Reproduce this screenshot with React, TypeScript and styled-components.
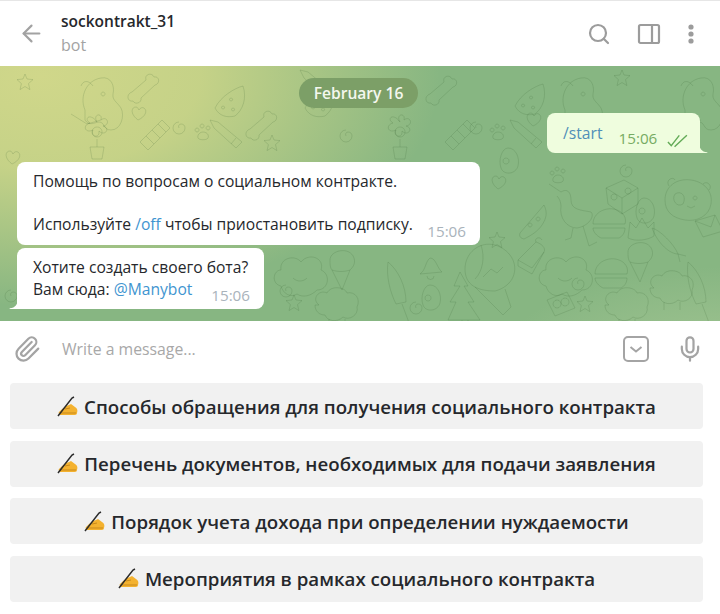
import styled, { createGlobalStyle } from "styled-components";
import { ArrowLeft, Mic, Paperclip, Search } from "lucide-react";

const GlobalStyle = createGlobalStyle`
  html, body {
    margin: 0;
    padding: 0;
    background: #fff;
    font-family: "Open Sans", "Liberation Sans", sans-serif;
  }
`;

const KEYBOARD = [
  "Способы обращения для получения социального контракта",
  "Перечень документов, необходимых для подачи заявления",
  "Порядок учета дохода при определении нуждаемости",
  "Мероприятия в рамках социального контракта",
];

// wallpaper doodles, local coords
const SHAPES: Record<string, string> = {
  dog: "M0 30c-6-14 2-30 16-32 10-2 14 8 12 16-1 6 4 8 8 14 4 8 0 22-10 22-8 0-6-8-12-8-6 1-10 4-14-2zM8 6c-4-6-10-6-12 0M18 12a2 2 0 1 0 .1 0M-14 34l16 10 14-4",
  bone: "M0 14L14 2c-2-6 6-8 8-3 6-1 6 7 1 8L9 20c1 5-6 7-8 3-6 1-7-7-1-9z",
  star: "M7 0l2 5 6 .6-4.500 4 1.400 6L7 12.500 2 15.600l1.400-6L-1 5.600 5 5z",
  melon: "M0 18C6 6 20-2 28-4c4 12 0 24-8 30C12 28 4 26 0 18zM8 16a1.5 1.5 0 1 0 .1 0M16 8a1.5 1.5 0 1 0 .1 0M18 18a1.5 1.5 0 1 0 .1 0",
  pencil: "M0 0l8 2 24 20-6 6L4 8zM26 18l-5 6",
  flower: "M12 12a5 5 0 1 0 .1 0M12 7c-5-8 6-10 4-2 6-5 10 5 2 6 8 2 2 11-4 5 1 8-9 6-6-1-8 4-11-5-3-7-7-4 0-11 7-1zM12 24v8M5 32h14l-2 12H7z",
  candy: "M0 24L22 2l8 8L8 32zM6 18l8 8M12 12l8 8M18 6l8 8",
  heart: "M8 14C0 8 1 1 6 1c2 0 2 2 3 3 1-2 3-3 5-2 4 3 1 9-6 12z",
  paw: "M8 10c5 0 7 5 4 7-2 1-6 1-8 0-3-2 0-7 4-7zM2 6a2 2 0 1 0 .1 0M7 2a2 2 0 1 0 .1 0M13 4a2 2 0 1 0 .1 0",
  balloon: "M0 24C0 8 14-4 30 0c14 4 24 18 18 32-3 7-10 12-18 14C12 46 0 40 0 24zM10 42l28 28 8-8-6-18M16 0c4 12 2 26-6 34M18 32l8-8 6 4 6-6",
  bird: "M-6-6L6 2c6-4 10 0 10 8 0 10 10 10 20 12 4 4-2 14-14 16-10 0-18-10-16-22 0-4-2-8-4-10M18 38l-2 10-6 2M28 36l6 20 8-4",
  pizza: "M0 28L24 0c4 8 2 14-2 20-4 6-10 10-18 14-4-1-5-3-4-6zM10 18a2 2 0 1 0 .1 0M18 12a2 2 0 1 0 .1 0",
  cube: "M0 8L18 0l14 8v16l-16 10L2 24zM0 8l16 10 16-10M16 18v16M8 14a3 3 0 1 0 .1 0M22 8a3 3 0 1 0 .1 0",
  panda: "M0 22C0 8 12 0 26 2c14 2 22 12 20 24-2 12-14 18-26 16C8 40 0 34 0 22zM4 8C0 2 8-2 10 2M38 6c4-4 10 2 6 6M10 16c6-4 12 2 8 10-6 4-12-4-8-10zM30 18a2 2 0 1 0 .1 0M22 28l4 2 4-2",
  burger: "M0 16C0 4 14-2 24 2c6 2 10 8 8 14zM0 20h32c0 4-2 8-6 10H8c-4-2-8-6-8-10z",
  crown: "M0 20L2 4l6 6 6-10 6 10 6-6v14c-6 4-18 6-26 2z",
  carrot: "M0 0c8 2 22 16 26 26-8 0-20-10-26-26zM26 26l8 2M26 26l2 8",
  envelope: "M0 6L20 0l8 16-20 6zM0 6l16 6 4-12",
  cake: "M0 18L18 0c6 2 10 6 8 10L14 32 0 24zM0 18l14 8 12-16M18 0c-2-4 4-6 6-2",
  cloud: "M6 34C-4 32-2 18 6 18 4 6 20 2 26 10 34 0 50 6 46 18c10 4 8 20-4 20-6 6-14 8-20 4-6 4-14 0-16-8zM18 26c4 4 10 4 14 0",
  cone: "M0 10C0 0 20-4 24 8c2 6-2 10-4 12L12 40 2 20C0 18 0 14 0 10zM2 20c6 2 12 2 18 0",
  sheep: "M4 20C-4 14 4 4 12 8c4-8 18-6 20 0 8-2 14 6 10 14 2 8-8 14-14 10-6 6-16 4-18-2-6 0-10-4-10-10zM14 34v8M30 34v8",
  umbrella: "M0 0c10 8 18 24 18 40l-10 2C2 30-2 14 0 0zM14 42l6 16c2 6-4 8-6 4",
  bell: "M0 18c6-4 5-12 10-16 6 0 7 10 12 14zM7 20a3 3 0 0 0 7 0",
  tree: "M20 0l8 14h-4l10 16h-6l12 18H8l8-18h-6l10-16h-6zM22 48v10h6V48",
  egg: "M8 0c8 0 12 10 10 18-2 8-14 10-17 2C-2 12 2 0 8 0zM6 10a3 3 0 1 0 .1 0",
  camera: "M0 8L20 0l8 16-20 8zM10 8a4 4 0 1 0 .1 0M18 6a4 4 0 1 0 .1 0",
  swirl: "M6 0a6 6 0 1 0 6 6c0-3-2-4-4-4s-3 2-2 4",
};

const DOODLES: [string, number, number][] = [
  ["star", 18, 74], ["dog", 85, 80], ["bone", 132, 78], ["melon", 215, 90], ["candy", 140, 118],
  ["flower", 85, 115], ["pencil", 210, 120], ["paw", 195, 122], ["heart", 130, 106], ["swirl", 173, 122],
  ["dog", 565, 80], ["bone", 430, 80], ["star", 615, 70], ["melon", 515, 88], ["candy", 445, 118],
  ["flower", 388, 115], ["pencil", 510, 120], ["heart", 525, 112], ["paw", 490, 122], ["swirl", 470, 122],
  ["dog", 685, 80], ["melon", 305, 90], ["pencil", 300, 70], ["bone", 250, 115], ["star", 265, 135], ["swirl", 340, 130],
  ["heart", 490, 175], ["pizza", 520, 205], ["bird", 555, 190], ["cube", 606, 180], ["panda", 665, 178],
  ["burger", 593, 208], ["crown", 628, 218], ["carrot", 652, 228], ["envelope", 695, 215], ["egg", 636, 198],
  ["balloon", 465, 245], ["cake", 518, 242], ["cloud", 540, 252], ["burger", 595, 258], ["cone", 628, 242],
  ["sheep", 650, 268], ["umbrella", 688, 262], ["umbrella", 388, 262], ["bell", 420, 256], ["tree", 440, 272],
  ["egg", 422, 285], ["camera", 547, 292], ["star", 578, 296], ["sheep", 605, 285], ["swirl", 572, 278],
  ["cloud", 275, 252], ["cone", 330, 250], ["sheep", 315, 285], ["star", 287, 295], ["swirl", 280, 285],
  ["egg", 500, 148], ["swirl", 620, 165], ["paw", 550, 165], ["star", 490, 232],
  ["swirl", 410, 302], ["swirl", 5, 290], ["heart", 4, 150],
];

const App = () => (
  <Page>
    <GlobalStyle />
    <Header>
      <BackButton>
        <ArrowLeft size={27} strokeWidth={1.9} />
      </BackButton>
      <Title>
        <Name>sockontrakt_31</Name>
        <Status>bot</Status>
      </Title>
      <HeaderActions>
        <Search size={24} strokeWidth={2.2} />
        <svg width="24" height="24" viewBox="0 0 24 24" fill="none" stroke="currentColor" strokeWidth="2.2">
          <rect x="2" y="3" width="20" height="18" rx="1.5" />
          <path d="M15 3v18" />
        </svg>
        <svg width="8" height="22" viewBox="0 0 8 22" fill="currentColor">
          <circle cx="4" cy="4" r="2.6" />
          <circle cx="4" cy="11" r="2.6" />
          <circle cx="4" cy="18" r="2.6" />
        </svg>
      </HeaderActions>
    </Header>

    <Chat>
      <Wallpaper viewBox="0 66 720 255" preserveAspectRatio="none" fill="none">
        {DOODLES.map(([shape, x, y], i) => (
          <path key={i} d={SHAPES[shape]} transform={`translate(${x} ${y})`} />
        ))}
      </Wallpaper>
      <DatePill>February 16</DatePill>
      <OutgoingRow>
        <OutBubble>
          <CommandOut>/start</CommandOut>
          <OutTime>15:06</OutTime>
          <svg width="24" height="14" viewBox="0 0 24 14" fill="none" stroke="#63ab57" strokeWidth="1.5">
            <path d="M1 8l3.500 4L13 1M8 13L21 1" />
          </svg>
          <TailOut width="9" height="10" viewBox="0 0 9 10">
            <path d="M0 0c0 5 3 9 8 9.200.7.300.5.800 0 .800H0z" fill="#effdde" />
          </TailOut>
        </OutBubble>
      </OutgoingRow>
      <FirstIncoming>
        <MessageText>
          Помощь по вопросам о социальном контракте.
          <br />
          <br />
          Используйте <Command>/off</Command> чтобы приостановить подписку.
        </MessageText>
        <InTime>15:06</InTime>
      </FirstIncoming>
      <LastIncoming>
        <MessageText>
          Хотите создать своего бота?
          <br />
          Вам сюда: <Command>@Manybot</Command>
        </MessageText>
        <InTime>15:06</InTime>
        <TailIn width="9" height="10" viewBox="0 0 9 10">
          <path d="M9 0c0 5-3 9-8 9.200-.7.300-.5.800 0 .800h8z" fill="#fff" />
        </TailIn>
      </LastIncoming>
    </Chat>

    <Composer>
      <AttachIcon>
        <Paperclip size={28} strokeWidth={1.9} />
      </AttachIcon>
      <Placeholder>Write a message...</Placeholder>
      <svg width="28" height="28" viewBox="0 0 28 28" fill="none" stroke="currentColor" strokeWidth="2">
        <rect x="2" y="2" width="24" height="24" rx="4" />
        <path d="M8.500 12l5.500 4.500 5.500-4.500" />
      </svg>
      <MicIcon>
        <Mic size={28} strokeWidth={1.9} />
      </MicIcon>
    </Composer>

    <Keyboard>
      {KEYBOARD.map((label) => (
        <KeyButton key={label}>
          <svg width="21" height="21" viewBox="0 0 21 21">
            <path d="M2 16c3-3 6-6 10-7l2-1 4 3c2 1 3 3 2 6 0 2-2 2-4 2H3c-1-1-2-2-1-3z" fill="#f4b22f" />
            <path d="M4 17h15M8 13l5-1" stroke="#c98a1c" strokeWidth="1" fill="none" />
            <path d="M1 20L15 2l2-1" stroke="#2b2b2b" strokeWidth="1.500" fill="none" />
          </svg>
          <span>{label}</span>
        </KeyButton>
      ))}
    </Keyboard>
  </Page>
);

const Page = styled.div`
  width: 720px;
  height: 614px;
  overflow: hidden;
  background: #fff;
  color: #222;
`;
const Header = styled.header`
  height: 66px;
  box-sizing: border-box;
  border-top: 1px solid #e6e6e6;
  display: flex;
  align-items: center;
  padding: 0 25px 0 18px;
`;
const BackButton = styled.div`
  width: 43px;
  display: flex;
  color: #a2a2a2;
`;
const Title = styled.div`
  flex: 1;
  display: flex;
  flex-direction: column;
  gap: 3px;
`;
const Name = styled.div`
  font-size: 15.5px;
  font-weight: 600;
  line-height: 21px;
  color: #26282c;
`;
const Status = styled.div`
  font-size: 16px;
  line-height: 21px;
  color: #a3a3a3;
`;
const HeaderActions = styled.div`
  display: flex;
  align-items: center;
  gap: 26px;
  color: #9c9c9c;
`;
const Chat = styled.main`
  position: relative;
  height: 255px;
  overflow: hidden;
  display: flex;
  flex-direction: column;
  background:
    radial-gradient(ellipse 400px 230px at 40px 10px, #d0d78a 0%, rgba(204, 213, 136, 0.9) 40%, rgba(204, 213, 136, 0) 100%),
    radial-gradient(ellipse 240px 120px at 720px 321px, #a8c896 0%, rgba(168, 200, 150, 0) 100%),
    #87b682;
`;
const Wallpaper = styled.svg`
  position: absolute;
  inset: 0;
  width: 100%;
  height: 100%;
  stroke: rgba(55, 95, 50, 0.17);
  stroke-width: 1;
  stroke-linejoin: round;
`;
const DatePill = styled.div`
  position: relative;
  align-self: center;
  margin: 12px 3px 0 0;
  height: 30px;
  line-height: 30px;
  padding: 0 15px;
  border-radius: 15px;
  background: #7c9f67;
  color: #f4f7ee;
  font-size: 15.6px;
  font-weight: 600;
`;
const OutgoingRow = styled.div`
  position: relative;
  display: flex;
  justify-content: flex-end;
  padding-right: 20px;
  margin-top: 5px;
`;
const OutBubble = styled.div`
  position: relative;
  width: 153px;
  height: 40px;
  box-sizing: border-box;
  display: flex;
  align-items: flex-end;
  padding: 0 10px 5px 16px;
  background: #effdde;
  border-radius: 8px 8px 0 8px;
`;
const CommandOut = styled.span`
  font-size: 15.7px;
  line-height: 24px;
  margin-bottom: 3px;
  color: #4f8fb8;
`;
const OutTime = styled.span`
  font-size: 15.2px;
  line-height: 20px;
  margin-left: 16px;
  margin-right: 10px;
  color: #76ab62;
`;
const TailOut = styled.svg`
  position: absolute;
  right: -8px;
  bottom: 0;
`;
const TailIn = styled.svg`
  position: absolute;
  left: -8px;
  bottom: 0;
`;
const InBubble = styled.div`
  position: relative;
  align-self: flex-start;
  margin-left: 17px;
  box-sizing: border-box;
  background: #fff;
`;
const FirstIncoming = styled(InBubble)`
  margin-top: 9px;
  width: 463px;
  height: 83px;
  padding: 9px 16px;
  border-radius: 8px;
`;
const LastIncoming = styled(InBubble)`
  margin-top: 3px;
  width: 247px;
  height: 61px;
  padding: 9px 16px;
  border-radius: 8px 8px 8px 0;
`;
const MessageText = styled.div`
  font-size: 15.65px;
  line-height: 21.5px;
  color: #26282c;
  white-space: nowrap;
`;
const Command = styled.span`
  color: #3f95d0;
`;
const InTime = styled.span`
  position: absolute;
  right: 14px;
  bottom: 4px;
  font-size: 15.2px;
  line-height: 20px;
  color: #a9b3bb;
`;
const Composer = styled.section`
  height: 55px;
  display: flex;
  align-items: center;
  padding: 0 16px 0 13px;
  color: #a4a4a4;
`;
const AttachIcon = styled.div`
  display: flex;
  width: 49px;
`;
const Placeholder = styled.div`
  flex: 1;
  font-size: 15.8px;
  color: #a8a8a8;
`;
const MicIcon = styled.div`
  display: flex;
  margin-left: 26px;
`;
const Keyboard = styled.nav`
  display: flex;
  flex-direction: column;
  gap: 11.5px;
  padding: 7px 17px 0 10px;
`;
const KeyButton = styled.div`
  height: 46px;
  display: flex;
  align-items: center;
  justify-content: center;
  gap: 6px;
  border-radius: 4px;
  background: #f1f1f1;
  font-size: 18.7px;
  font-weight: 600;
  color: #26282c;
`;

export default App;
